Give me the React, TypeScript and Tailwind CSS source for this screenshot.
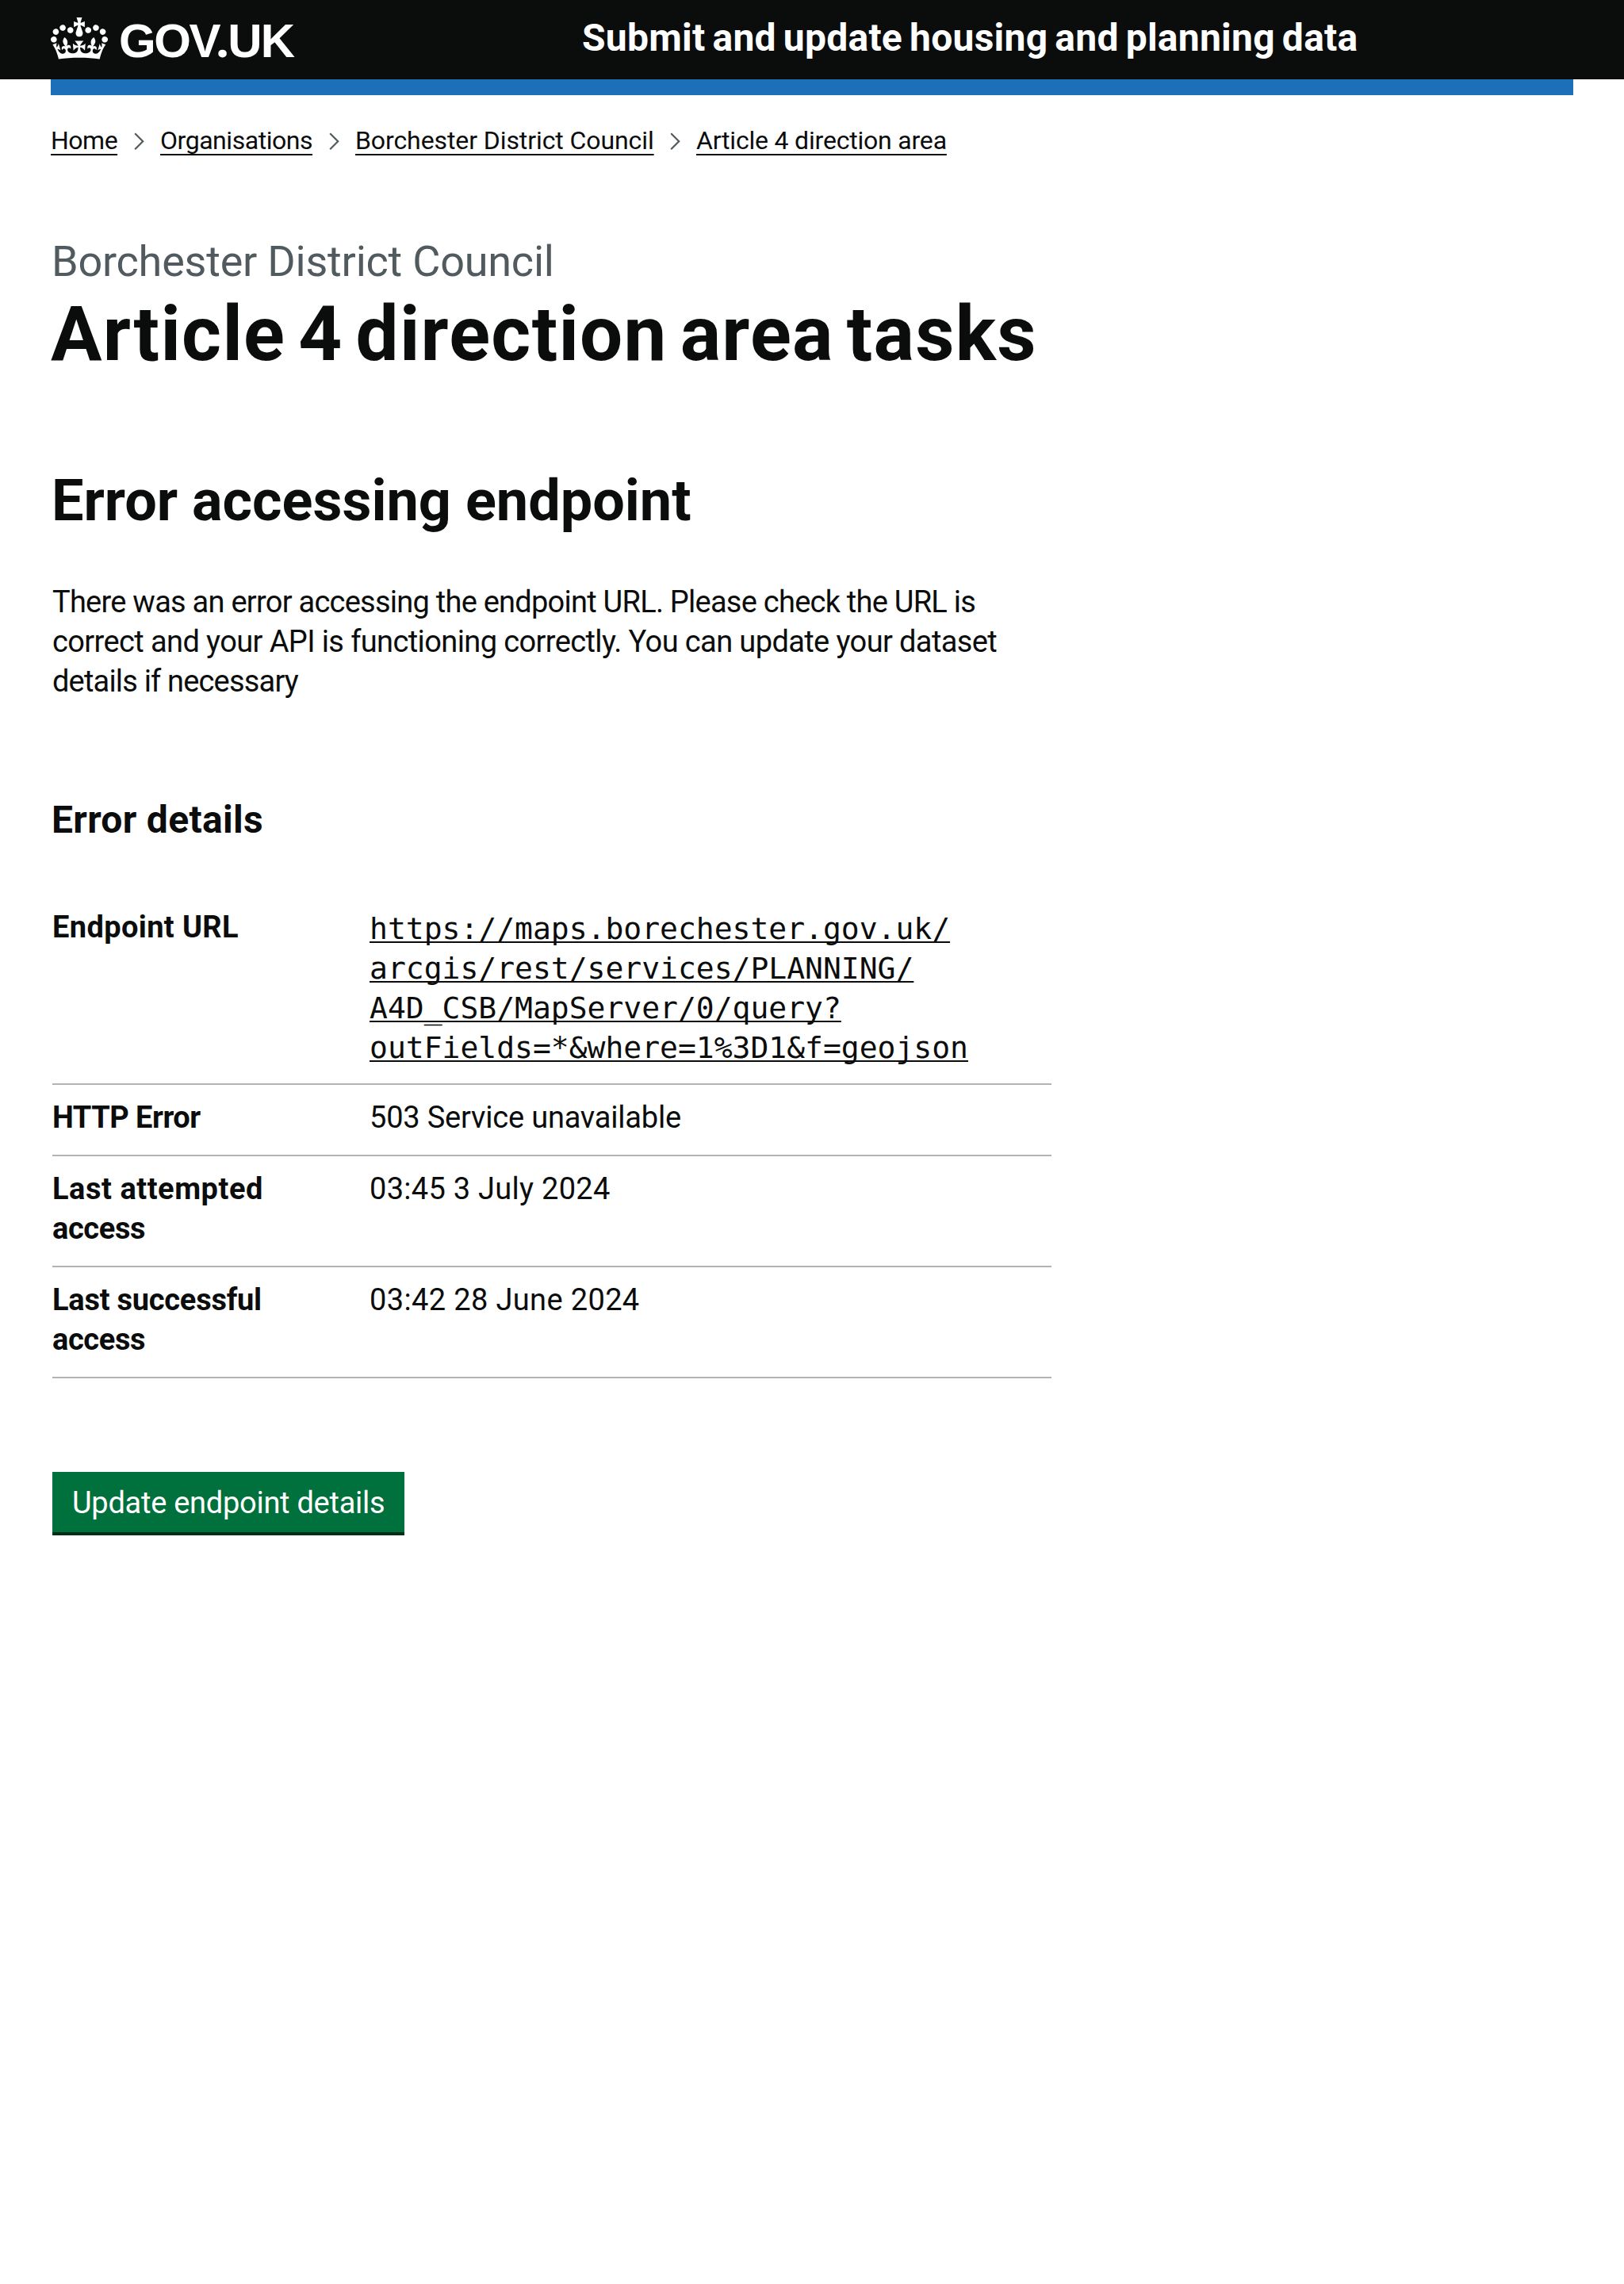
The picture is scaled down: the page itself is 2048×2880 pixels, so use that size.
import type { ReactNode } from "react";

const crumbs = [
  { label: "Home", style: "w-[84px] tracking-[-0.5px]" },
  { label: "Organisations", style: "w-[192px] tracking-[-0.46px]" },
  { label: "Borchester District Council", style: "w-[376px] tracking-[-0.09px]" },
  { label: "Article 4 direction area", style: "w-[316px] tracking-[-0.2px]" },
];

function Crown() {
  return (
    <svg viewBox="0 0 132 97" className="h-[53px] w-[72px] shrink-0" fill="#ffffff" aria-hidden="true">
      <path d="M25 30.2c3.5 1.5 7.7-.2 9.1-3.7 1.5-3.6-.2-7.8-3.9-9.2-3.6-1.4-7.6.3-9.1 3.9-1.4 3.5.3 7.5 3.9 9zM9 39.5c3.6 1.5 7.8-.2 9.2-3.7 1.5-3.6-.2-7.8-3.9-9.1-3.6-1.5-7.6.2-9.1 3.8-1.4 3.5.3 7.5 3.8 9zM4.4 57.2c3.5 1.5 7.7-.2 9.1-3.8 1.5-3.6-.2-7.7-3.9-9.1-3.5-1.5-7.6.3-9.1 3.8-1.4 3.5.3 7.6 3.9 9.1zm38.3-21.4c3.5 1.5 7.7-.2 9.1-3.8 1.5-3.6-.2-7.7-3.9-9.1-3.6-1.5-7.6.3-9.1 3.8-1.3 3.6.4 7.7 3.9 9.1zm64.4-5.6c-3.6 1.5-7.8-.2-9.1-3.7-1.5-3.6.2-7.8 3.8-9.2 3.6-1.4 7.7.3 9.2 3.9 1.3 3.5-.4 7.5-3.9 9zm15.9 9.3c-3.6 1.5-7.7-.2-9.1-3.7-1.5-3.6.2-7.8 3.7-9.1 3.6-1.5 7.7.2 9.2 3.8 1.5 3.5-.3 7.5-3.8 9zm4.7 17.7c-3.6 1.5-7.8-.2-9.2-3.8-1.5-3.6.2-7.7 3.9-9.1 3.6-1.5 7.7.3 9.2 3.8 1.3 3.5-.4 7.6-3.9 9.1zM89.3 35.8c-3.6 1.5-7.8-.2-9.2-3.8-1.4-3.6.2-7.7 3.9-9.1 3.6-1.5 7.7.3 9.2 3.8 1.4 3.6-.3 7.7-3.9 9.1zM69.7 17.7l8.9 4.7V9.3l-8.9 2.8c-.2-.3-.5-.6-.9-.9L72.4 0H59.6l3.5 11.2c-.3.3-.6.5-.9.9l-8.8-2.8v13.1l8.8-4.7c.3.3.6.7.9.9l-5 15.4v.1c-.2.8-.4 1.6-.4 2.4 0 4.1 3.1 7.5 7 8.1h.2c.3 0 .7.1 1 .1.4 0 .7 0 1-.1h.2c4-.6 7.1-4.1 7.1-8.1 0-.8-.1-1.7-.4-2.4V34l-5.1-15.4c.4-.2.7-.6 1-.9zM66 92.8c16.9 0 32.8 1.1 47.1 3.2 4-16.9 8.9-26.7 14-33.5l-9.6-3.4c1 4.9 1.1 7.2 0 10.2-1.5-1.4-3-4.3-4.2-8.7L108.6 76c2.8-2 5-3.2 7.5-3.3-4.4 9.4-10 11.9-13.6 11.2-4.3-.8-6.3-4.6-5.6-7.9 1-4.7 5.7-5.9 8-.5 4.3-8.7-3-11.4-7.6-8.8 7.1-7.2 7.9-13.5 2.1-21.1-8 6.1-8.1 12.3-4.5 20.8-4.7-5.4-12.1-2.5-9.5 6.2 3.4-5.2 7.9-2 7.2 3.1-.6 4.3-6.4 7.8-13.5 7.2-10.3-.9-10.9-8-11.2-13.8 2.5-.5 7.1 1.8 11 7.3L80.2 60c-4.1 4.4-8 5.3-12.3 5.4 1.4-4.4 8-11.6 8-11.6H55.5s6.4 7.2 7.9 11.6c-4.2-.1-8-1-12.3-5.4l1.4 16.4c3.9-5.5 8.5-7.7 10.9-7.3-.3 5.8-.9 12.8-11.1 13.8-7.2.6-12.9-2.9-13.5-7.2-.7-5 3.8-8.3 7.1-3.1 2.7-8.7-4.6-11.6-9.4-6.2 3.7-8.5 3.6-14.7-4.6-20.8-5.8 7.6-5 13.9 2.2 21.1-4.7-2.6-11.9.1-7.7 8.8 2.3-5.5 7.1-4.2 8.1.5.7 3.3-1.3 7.1-5.7 7.9-3.5.7-9-1.8-13.5-11.2 2.5.1 4.7 1.3 7.5 3.3l-4.7-15.4c-1.2 4.4-2.7 7.2-4.3 8.7-1.1-3-.9-5.3 0-10.2l-9.5 3.4c5 6.9 9.9 16.7 14 33.5 14.8-2.1 30.8-3.2 47.7-3.2z" />
    </svg>
  );
}

function Chevron() {
  return (
    <svg viewBox="0 0 54 24" className="mt-[9px] h-6 w-[54px] shrink-0" fill="none" stroke="#505a5f" strokeWidth="2.2" aria-hidden="true">
      <path d="M22.2 2.3 32.2 12.3 22.2 22.3" />
    </svg>
  );
}

function Row({ label, children }: { label: ReactNode; children: ReactNode }) {
  return (
    <div className="grid grid-cols-[400px_1fr] border-b-2 border-[#b1b4b6] pt-4 pb-[22px]">
      <dt className="font-bold">{label}</dt>
      <dd>{children}</dd>
    </div>
  );
}

export default function App() {
  return (
    <div className="min-h-[2880px] w-[2048px] bg-white font-[Roboto,sans-serif] text-[#0b0c0c]">
      <header className="flex h-[100px] bg-[#0b0c0c] pl-16 text-white">
        <a className="flex w-[670px] pt-[22px]">
          <Crown />
          <span className="-mt-[5px] ml-[14px] flex h-[66px] items-baseline font-['Liberation_Sans',sans-serif] text-[60px] leading-[66px] font-bold tracking-[-2.4px] whitespace-nowrap">
            GOV
            <span className="-ml-[5px] w-[16px] font-[Roboto,sans-serif] text-[66px] tracking-normal">.</span>
            <span className="tracking-[-1.8px]">UK</span>
          </span>
        </a>
        <a className="pt-[18px] text-[48px] leading-[60px] font-bold tracking-[0.25px] [word-spacing:-3.2px] whitespace-nowrap">
          Submit and update housing and planning data
        </a>
      </header>
      <div className="mx-16 h-5 bg-[#1d70b8]" />

      <nav className="flex pt-[37px] pl-16 text-[32px] leading-10">
        {crumbs.map((c, i) => (
          <div key={c.label} className="flex">
            {i > 0 && <Chevron />}
            <a className={`${c.style} whitespace-nowrap underline decoration-2 underline-offset-[6px] [text-decoration-skip-ink:none]`}>
              {c.label}
            </a>
          </div>
        ))}
      </nav>

      <main className="w-[1326px] pl-[66px] text-[38px] leading-[50px]">
        <div className="-ml-px">
          <span className="mt-[103px] block text-[54px] leading-[60px] tracking-[-0.22px] text-[#505a5f]">
            Borchester District Council
          </span>
          <h1 className="mt-[11px] -ml-px text-[96px] leading-[100px] font-bold tracking-[1.3px] [word-spacing:-9.2px] whitespace-nowrap">
            Article 4 direction area tasks
          </h1>
          <h2 className="mt-[121px] text-[72px] leading-[80px] font-bold">Error accessing endpoint</h2>
        </div>

        <p className="mt-[62px] whitespace-nowrap">
          <span className="block tracking-[-0.75px]">There was an error accessing the endpoint URL. Please check the URL is</span>
          <span className="block tracking-[-0.61px]">correct and your API is functioning correctly. You can update your dataset</span>
          <span className="block tracking-[-0.82px]">details if necessary</span>
        </p>

        <h3 className="mt-[120px] -ml-px text-[48px] leading-[60px] font-bold tracking-[0.3px]">Error details</h3>

        <dl className="mt-16">
          <Row label={<span className="tracking-[0.37px]">Endpoint URL</span>}>
            <a className="mt-[2px] -mb-[2px] block font-['DejaVu_Sans_Mono',monospace] whitespace-nowrap underline decoration-2 underline-offset-[3px] [text-decoration-skip-ink:none]">
              https://maps.borechester.gov.uk/
              <br />
              arcgis/rest/services/PLANNING/
              <br />
              A4D_CSB/MapServer/0/query?
              <br />
              outFields=*&amp;where=1%3D1&amp;f=geojson
            </a>
          </Row>
          <Row label={<span className="tracking-[-0.5px]">HTTP Error</span>}>
            <span className="tracking-[-0.2px]">503 Service unavailable</span>
          </Row>
          <Row
            label={
              <>
                <span className="block tracking-[0.54px]">Last attempted</span>
                <span className="block tracking-[-0.39px]">access</span>
              </>
            }
          >
            <span className="tracking-[0.28px]">03:45 3 July 2024</span>
          </Row>
          <Row
            label={
              <>
                <span className="block tracking-[-0.25px]">Last successful</span>
                <span className="block tracking-[-0.39px]">access</span>
              </>
            }
          >
            <span className="tracking-[0.36px]">03:42 28 June 2024</span>
          </Row>
        </dl>

        <button className="mt-[118px] block h-[76px] w-[444px] bg-[#00703c] pb-3 pl-[25px] pt-[14px] text-left tracking-[-0.27px] whitespace-nowrap text-white shadow-[0_4px_0_#002d18]">
          Update endpoint details
        </button>
      </main>
    </div>
  );
}
